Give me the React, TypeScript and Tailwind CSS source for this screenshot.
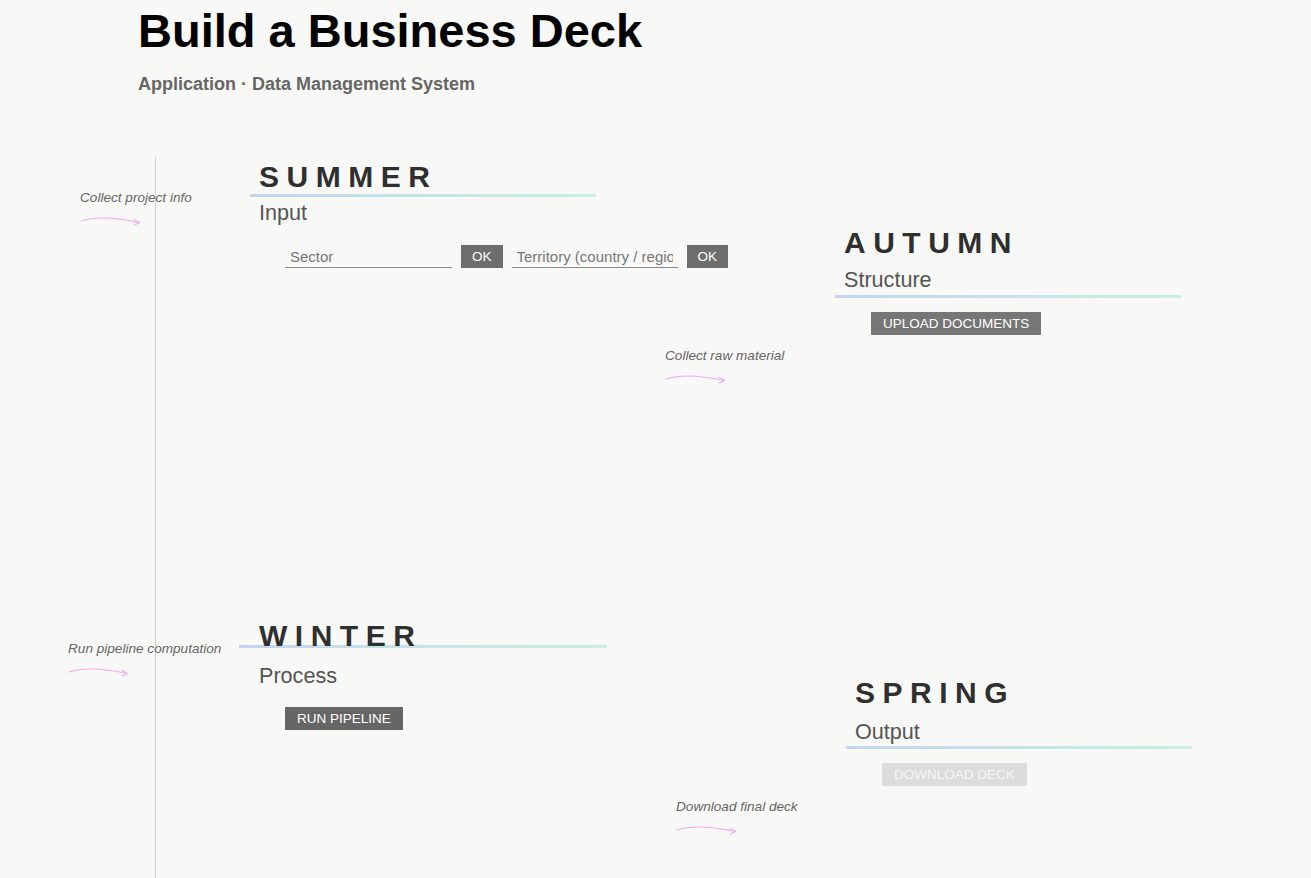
import React from 'react';

interface SectionProps {
  title: string;
  subtitle: string;
  note: string;
  // absolute placement of the gradient rule and the margin note
  lineAt: string;
  noteAt: string;
  className: string;
  subGap: string;
  bodyGap: string;
  children: React.ReactNode;
}

function Arrow() {
  return (
    <svg width="62" height="11" viewBox="0 0 62 11" fill="none" className="block">
      <path d="M1 6 C 16 1, 34 2, 59 7.5" stroke="#f1a9f1" strokeWidth="1.1" strokeLinecap="round" />
      <path d="M54 4.5 L59.5 7.6 L54.5 10" stroke="#f1a9f1" strokeWidth="1.1" strokeLinecap="round" strokeLinejoin="round" />
    </svg>
  );
}

function Section({ title, subtitle, note, lineAt, noteAt, className, subGap, bodyGap, children }: SectionProps) {
  return (
    <section className={`relative shrink-0 ${className}`}>
      <div className={`absolute left-0 w-full h-[3px] bg-linear-to-r from-[#c2d5f1] to-[#c8f0e2] ${lineAt}`} />
      {/* margin note with its little pink arrow */}
      <div className={`absolute whitespace-nowrap ${noteAt}`}>
        <p className="text-[13.6px] leading-[16px] italic text-[#666]">{note}</p>
        <div className="mt-[9px]">
          <Arrow />
        </div>
      </div>
      <h2 className="relative text-[30px] leading-[36px] font-bold tracking-[0.25em] text-[#2f2f2f]">{title}</h2>
      <p className={`text-[21.6px] leading-[28px] text-[#555] ${subGap}`}>{subtitle}</p>
      <div className={bodyGap}>{children}</div>
    </section>
  );
}

function Button({ label, className }: { label: string; className: string }) {
  return (
    <button type="button" className={`h-[23px] text-[13.5px] leading-[23px] ${className}`}>
      {label}
    </button>
  );
}

export default function App() {
  return (
    <div className="min-h-screen bg-[#f8f8f6] font-['Liberation_Sans',Arial,sans-serif] overflow-hidden">
      <header className="pl-[138px] pt-[7px]">
        <h1 className="text-[47px] leading-[48px] font-bold text-black">Build a Business Deck</h1>
        <p className="mt-[15px] text-[18px] leading-[28px] font-bold text-[#666]">
          Application · Data Management System
        </p>
      </header>

      <main className="mt-[59px] ml-[155px] border-l border-[#d2d2d2] pt-[2px] min-h-[721px]">
        {/* summer / autumn */}
        <div className="flex items-start h-[459px]">
          <Section
            title="SUMMER"
            subtitle="Input"
            note="Collect project info"
            lineAt="top-[35px]"
            noteAt="left-[-170px] top-[31px]"
            className="ml-[94px] w-[346px] pl-[9px]"
            subGap="mt-[4px]"
            bodyGap="mt-[18px] ml-[26px]"
          >
            <div className="flex items-center gap-[9px]">
              <input
                placeholder="Sector"
                className="w-[167px] h-[23px] border-b border-[#8a8a8a] bg-transparent px-[5px] text-[15px] text-[#555] placeholder:text-[#777] outline-none"
              />
              <Button label="OK" className="px-[11px] bg-[#6e6e6e] text-white" />
              <input
                placeholder="Territory (country / region)"
                className="w-[166px] h-[23px] border-b border-[#8a8a8a] bg-transparent px-[5px] text-[15px] text-[#555] placeholder:text-[#777] outline-none"
              />
              <Button label="OK" className="px-[11px] bg-[#6e6e6e] text-white" />
            </div>
          </Section>

          <Section
            title="AUTUMN"
            subtitle="Structure"
            note="Collect raw material"
            lineAt="top-[70px]"
            noteAt="left-[-170px] top-[123px]"
            className="ml-[239px] mt-[66px] w-[346px] pl-[9px]"
            subGap="mt-[5px]"
            bodyGap="mt-[17px] ml-[27px]"
          >
            <Button label="UPLOAD DOCUMENTS" className="px-3 bg-[#767676] text-white" />
          </Section>
        </div>

        {/* winter / spring */}
        <div className="flex items-start h-[260px]">
          <Section
            title="WINTER"
            subtitle="Process"
            note="Run pipeline computation"
            lineAt="top-[27px]"
            noteAt="left-[-171px] top-[23px]"
            className="ml-[83px] w-[368px] pl-[20px]"
            subGap="mt-[8px]"
            bodyGap="mt-[16px] ml-[26px]"
          >
            <Button label="RUN PIPELINE" className="px-3 bg-[#666] text-white" />
          </Section>

          <Section
            title="SPRING"
            subtitle="Output"
            note="Download final deck"
            lineAt="top-[71px]"
            noteAt="left-[-170px] top-[124px]"
            className="ml-[239px] mt-[57px] w-[346px] pl-[9px]"
            subGap="mt-[7px]"
            bodyGap="mt-[16px] ml-[27px]"
          >
            <Button label="DOWNLOAD DECK" className="px-3 bg-[#dcdcdc] text-[#f6f6f6]" />
          </Section>
        </div>
      </main>
    </div>
  );
}
